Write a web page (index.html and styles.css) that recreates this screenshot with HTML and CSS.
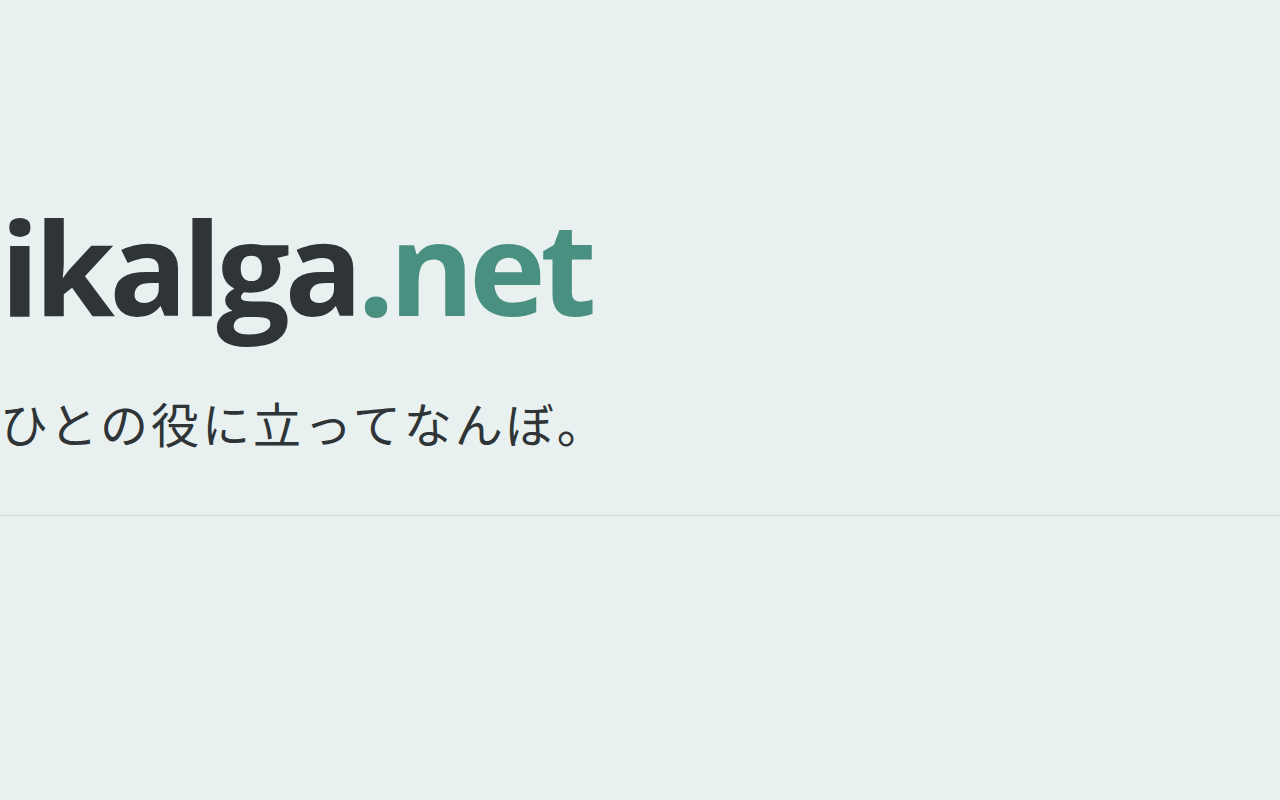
FILE: index.html
```html
<!DOCTYPE html>
<html lang="ja">
<head>
<meta charset="utf-8">
<title>ikalga.net</title>
<link rel="stylesheet" href="styles.css">
</head>
<body>
<header class="hero">
  <h1 class="logo">ikalga<span class="tld">.net</span></h1>
  <p class="tagline">ひとの役に立ってなんぼ。</p>
</header>
</body>
</html>
```
FILE: styles.css
```css
html, body {
  margin: 0;
  padding: 0;
  background: #e8f1f0;
  height: 100%;
}
body {
  font-family: "Open Sans", "Noto Sans CJK JP", sans-serif;
  color: #2f3437;
}
.hero {
  padding: 201px 0 63px 0;
  border-bottom: 1px solid #cdd6d5;
}
.logo {
  margin: 0;
  font-family: "Open Sans", sans-serif;
  font-weight: 700;
  font-size: 130px;
  line-height: 1;
  letter-spacing: -5.5px;
  color: #2f3437;
}
.tld {
  color: #4a9080;
}
.tagline {
  margin: 63px 0 0 0;
  font-family: "Noto Sans CJK JP", sans-serif;
  font-weight: 400;
  font-size: 48px;
  line-height: 1.2;
  letter-spacing: 3px;
  color: #2f3437;
}
```
